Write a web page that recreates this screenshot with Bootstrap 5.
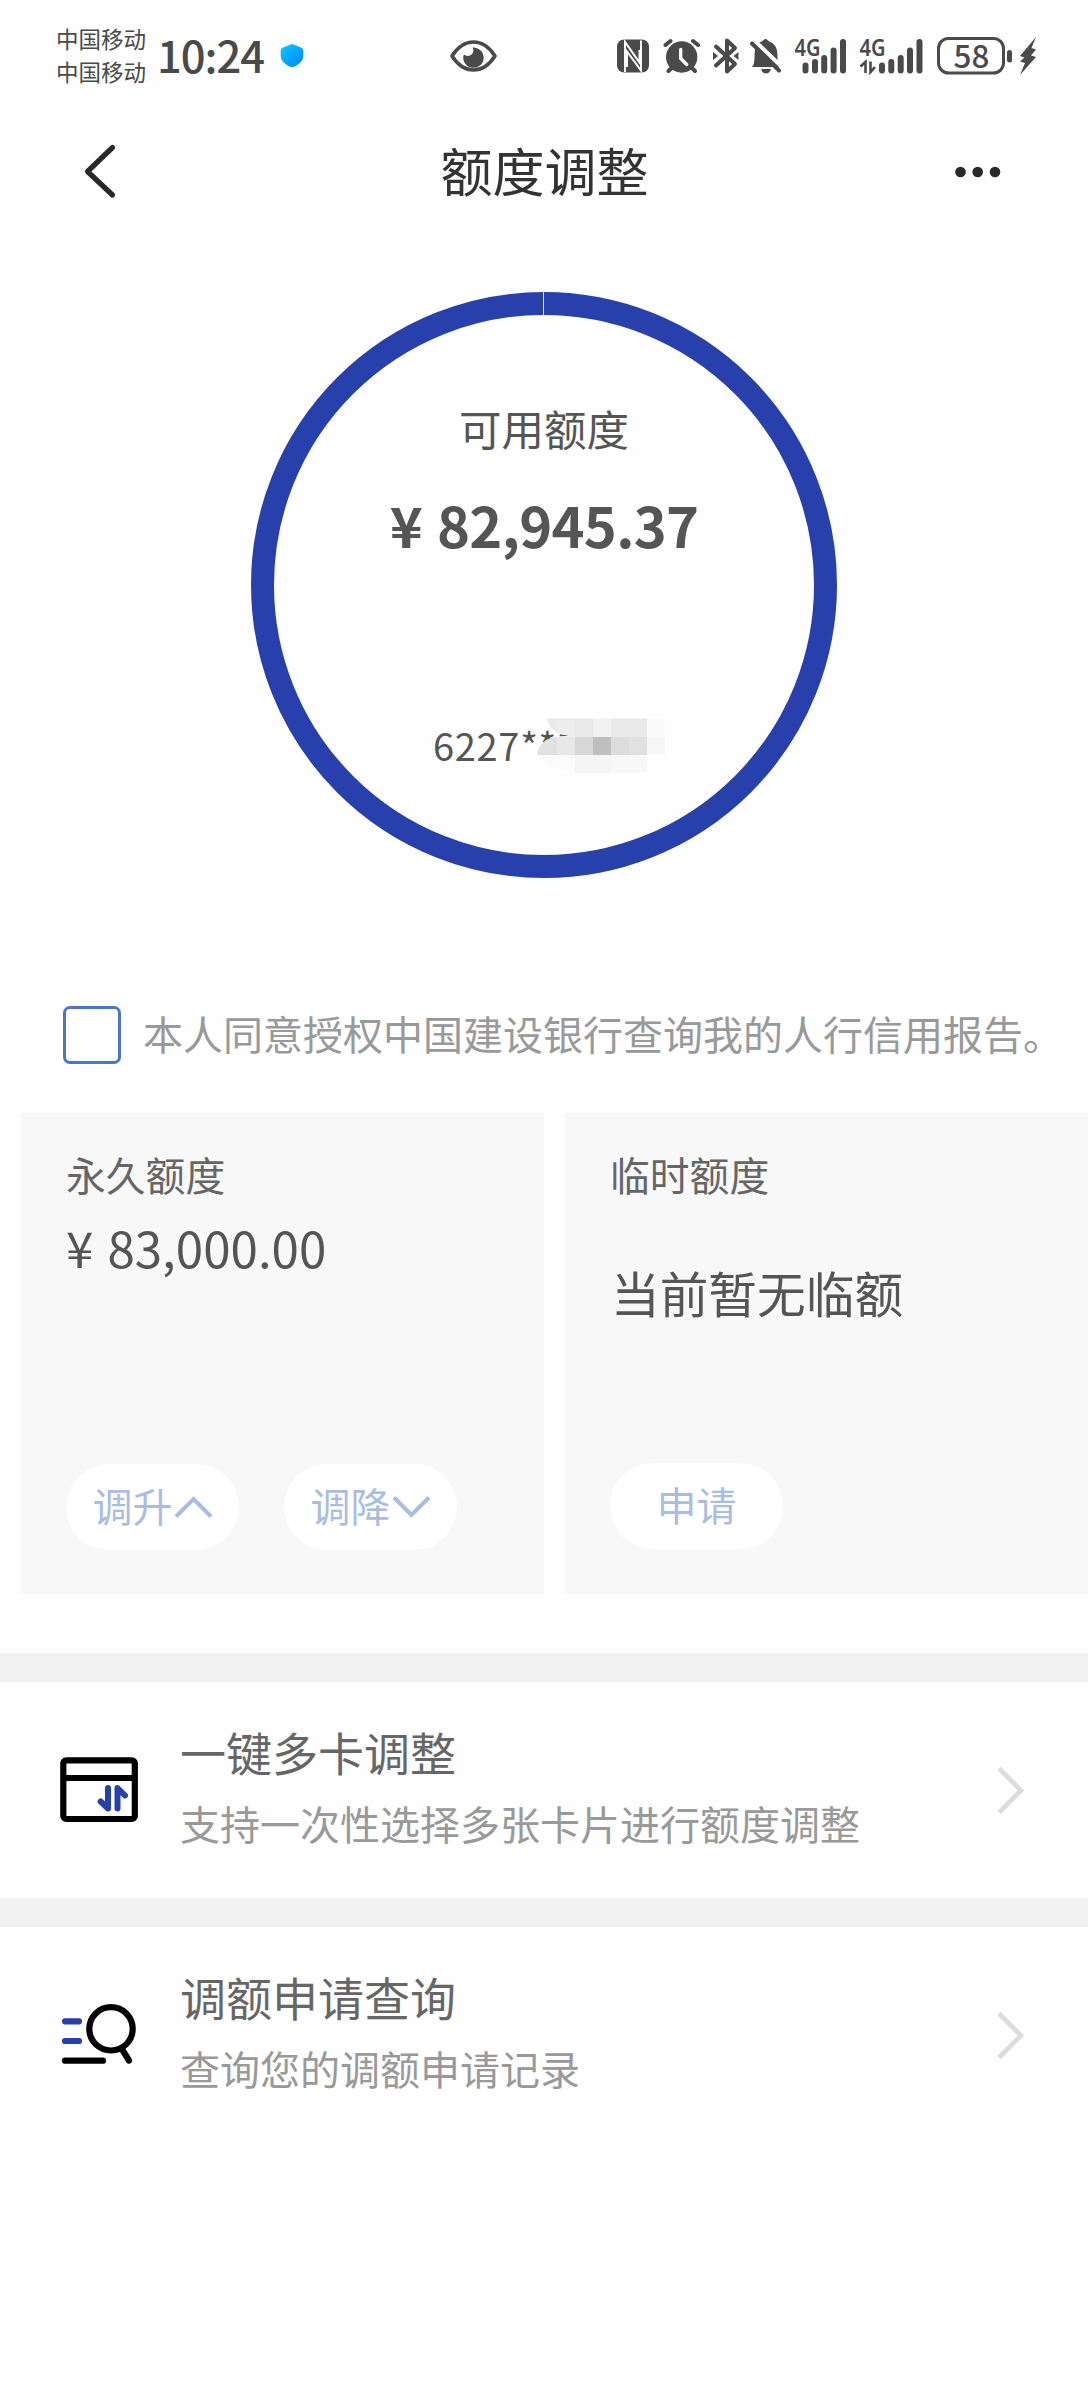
<!DOCTYPE html>
<html lang="zh-CN">
<head>
<meta charset="utf-8">
<meta name="viewport" content="width=device-width, initial-scale=1">
<title>额度调整</title>
<link rel="stylesheet" href="https://cdn.jsdelivr.net/npm/bootstrap@5.3.0/dist/css/bootstrap.min.css">
<style>
body{font-family:"Noto Sans","Noto Sans CJK SC",sans-serif;background:#fefefe;color:#555;width:1088px;height:2400px;overflow:hidden}
svg{display:block;flex:none}
.figures{font-family:"Noto Sans CJK SC","Noto Sans",sans-serif}
.statusbar{height:110px;padding:0 50px 0 56px;color:#4a4a4a}
.carrier{font-size:22.5px;line-height:32.5px;width:101px;padding-top:24px}
.clock{font-size:43.5px;line-height:60px;font-weight:500;letter-spacing:-1px;padding-top:25px;width:123px;white-space:nowrap}
.status-icons{padding-top:28px}
.titlebar{height:122px;padding:0 86px 0 80px}
.titlebar h1{font-size:52px;line-height:70px;color:#333;font-weight:400;margin:2px 0 0 15px}
.ring{width:586px;height:586px;margin:60px auto 0;border:23.5px solid #2840ab}
.ring-gap{width:1.5px;height:24px;left:268.7px;top:-24px;background:#dfe4f6}
.ring-label{font-size:42.5px;line-height:60px;padding-top:85px}
.ring-amount{font-size:56px;line-height:76px;font-weight:700;letter-spacing:-.7px;word-spacing:3px;padding-top:26px}
.card-no{font-size:38px;line-height:52px;letter-spacing:.7px;margin:157px 0 0 159px;align-self:flex-start}
.mosaic{left:97px;top:-6px}
.agree{margin-top:128px;padding-left:63px;height:58px}
.agree .form-check-input{width:58px;height:58px;margin:0 22px 0 0;border:3px solid #4a76c9;border-radius:7px;background:#fff;flex:none}
.agree label{font-size:40px;line-height:58px;color:#999}
.limits{margin:49px 0 59px;padding-left:21px;gap:21px;height:481px}
.limit{background:#f8f8f8;width:523px;padding:34px 45px 0}
.limit h2{font-size:39.8px;line-height:58px;font-weight:400;color:#666;margin:0}
.limit-sum{font-size:49.3px;line-height:66px;word-spacing:3px;margin-top:9px;height:69px}
.limit-none{font-size:48.7px;line-height:66px;margin-top:56px;margin-left:1px}
.actions{gap:45px;margin-top:181px}
.actions.single{margin-top:136px}
.actions .btn{width:173px;height:86px;border-radius:43px;background:#fff;color:#a9bde3;font-size:40px;line-height:58px;padding:0;border:0}
.band{height:29px;background:#f1f1f1}
.entry{height:216px;padding:0 63px 0 59px}
.entry-text{margin-left:39px;padding-top:41px}
.entry-text h3{font-size:46px;line-height:60px;font-weight:400;color:#666;margin:0 0 12px}
.entry-text p{font-size:40px;line-height:60px;color:#999;margin:0}
</style>
</head>
<body>
<header class="statusbar d-flex align-items-start">
  <div class="carrier">中国移动<br>中国移动</div>
  <div class="clock figures">10:24</div>
  <div class="status-icons d-flex flex-grow-1">
    <svg width="24" height="56" viewBox="279 28 24 56"><defs><linearGradient id="sh" x1="0" y1="0" x2="1" y2="1"><stop offset="0" stop-color="#05cdff"/><stop offset="1" stop-color="#0580ff"/></linearGradient></defs><path d="M291 44l9 3.500q2.300.8 2.300 3.200v5q0 7-10 11.200q-1.300.5-2.600 0q-10-4.200-10-11.200v-5q0-2.400 2.300-3.200z" fill="url(#sh)"/></svg>
    <svg style="margin-left:144px" width="52" height="56" viewBox="447 28 52 56"><path d="M451 56Q460 42 472.500 42T494 56Q485 70 472.500 70T451 56z" fill="none" stroke="#4a4a4a" stroke-width="3.600" stroke-linejoin="round"/><path d="M471.500 47.500a10.200 10.200 0 1 1-9 8q.7-1 1.200-.5a5.500 5.500 0 0 0 8.300-6.400z" fill="#4a4a4a"/></svg>
    <svg class="ms-auto" width="34" height="56" viewBox="616 28 34 56"><rect x="617" y="39.500" width="32" height="33" rx="7" fill="#4a4a4a"/><path d="M625 72V42l14.500 20.500V50M641 40.500V70.500L627 51.500V67" fill="none" stroke="#fff" stroke-width="2"/></svg>
    <svg style="margin-left:13px" width="38" height="56" viewBox="663 28 38 56"><g stroke="#4a4a4a" stroke-width="4" stroke-linecap="round"><path d="M665.500 45l5-4M698 45l-5-4M668.500 71l5-5M695 71l-5-5"/></g><circle cx="681.700" cy="57" r="15.700" fill="#4a4a4a"/><path d="M680.700 49.500v9l6 6" fill="none" stroke="#fff" stroke-width="3.300" stroke-linecap="round" stroke-linejoin="round"/></svg>
    <svg style="margin-left:11px" width="28" height="56" viewBox="712 28 28 56"><path d="M716 46.500l19 17.500-8 7.500v-31l8 7.500-19 17.500" fill="none" stroke="#4a4a4a" stroke-width="4" stroke-linecap="round" stroke-linejoin="round"/><path d="M713 52l5 4-5 4zM738.500 52l-5 4 5 4z" fill="#4a4a4a"/></svg>
    <svg style="margin-left:9px" width="34" height="56" viewBox="749 28 34 56"><path d="M752 67q2.500-3 2.500-8v-4q0-12 8-14 3-4 6 0 9 3 9 14v5q0 4 3 7zM761 69h10q-1.500 4.500-5 4.500T761 69z" fill="#4a4a4a"/><path d="M754.500 40.500L783 68" stroke="#fefefe" stroke-width="4"/><path d="M752 43.500L779 70.500" stroke="#4a4a4a" stroke-width="4" stroke-linecap="round"/></svg>
    <svg style="margin-left:11px" width="54" height="56" viewBox="794 28 54 56"><text x="794.500" y="56" font-size="23" font-weight="600" textLength="26" lengthAdjust="spacingAndGlyphs" fill="#4a4a4a">4G</text><path d="M805.500 65.500v5M815 62v8.500M824.200 58v12.500M833.600 50.500v20M843 42v28.500" stroke="#4a4a4a" stroke-width="6" stroke-linecap="round"/></svg>
    <svg style="margin-left:11px" width="66" height="56" viewBox="859 28 66 56"><text x="859.500" y="56" font-size="23" font-weight="600" textLength="26" lengthAdjust="spacingAndGlyphs" fill="#4a4a4a">4G</text><path d="M882 65.500v5M891.300 62v8.500M900.700 58v12.500M910 50.500v20M919.500 42v28.500" stroke="#4a4a4a" stroke-width="6" stroke-linecap="round"/><path d="M860.500 66.500l5-4.500v11M870.500 61.500v10.500l4.500-5" fill="none" stroke="#4a4a4a" stroke-width="2.600"/></svg>
    <svg style="margin-left:11px" width="78" height="56" viewBox="936 28 78 56"><rect x="938.500" y="38.500" width="65" height="34.500" rx="10" fill="none" stroke="#4a4a4a" stroke-width="3"/><rect x="1007" y="50" width="5" height="12.500" rx="2.500" fill="#4a4a4a"/><text class="figures" x="971.500" y="67.500" text-anchor="middle" font-size="31.500" font-weight="500" fill="#4a4a4a">58</text></svg>
    <svg style="margin-left:4px" width="20" height="56" viewBox="1018 28 20 56"><path d="M1036 37l-16 19 4.500 1.500-4.500 4 5 1.500-5 12 16-18-5-1.500 5-6-4.500-1.500z" fill="#4a4a4a"/></svg>
  </div>
</header>

<nav class="titlebar d-flex align-items-center justify-content-between">
  <svg width="40" height="60" viewBox="80 141 40 60"><path d="M112.500 147.500L87.500 171.500l25 23.500" fill="none" stroke="#292929" stroke-width="5.200" stroke-linecap="round" stroke-linejoin="round"/></svg>
  <h1>额度调整</h1>
  <svg width="48" height="20" viewBox="954 161 48 20"><g fill="#292929"><circle cx="960.500" cy="172" r="5.300"/><circle cx="977.700" cy="172" r="5.300"/><circle cx="995" cy="172" r="5.300"/></g></svg>
</nav>

<section class="ring rounded-circle position-relative d-flex flex-column align-items-center">
  <span class="ring-gap position-absolute"></span>
  <div class="ring-label">可用额度</div>
  <div class="ring-amount figures">¥ 82,945.37</div>
  <div class="card-no figures position-relative">6227***
    <svg class="mosaic position-absolute" width="200" height="62" viewBox="530 713 200 62">
      <defs><clipPath id="mz"><path d="M547 718.500H665V760Q648 772.500 640 772.500H575Q537 765 537 753Q540 741 552 737.500L569 735.500Q549 733 547 718.500z"/></clipPath></defs>
      <g clip-path="url(#mz)" shape-rendering="crispEdges">
        <path fill="#e9e9e9" d="M530 718h45v19h-45zM611 718h36v19h-36z"/><path fill="#ededed" d="M557 718h18v19h-18z"/><path fill="#e9e9e9" d="M575 718h18v19h-18z"/><path fill="#f2f2f2" d="M593 718h18v19h-18z"/><path fill="#fafafa" d="M647 718h18v19h-18z"/>
        <path fill="#e1e1e1" d="M530 737h27v18h-27z"/><path fill="#e8e8e8" d="M557 737h18v18h-18z"/><path fill="#d7d7d7" d="M575 737h18v18h-18z"/><path fill="#bfbfbf" d="M593 737h18v18h-18z"/><path fill="#dcdcdc" d="M611 737h18v18h-18z"/><path fill="#e1e1e1" d="M629 737h18v18h-18z"/><path fill="#f7f7f7" d="M647 737h18v18h-18z"/>
        <path fill="#fbfbfb" d="M530 755h45v18h-45z"/><path fill="#f5f5f5" d="M575 755h36v18h-36z"/><path fill="#f8f8f8" d="M611 755h36v18h-36z"/><path fill="#fefefe" d="M647 755h18v18h-18z"/>
      </g>
    </svg>
  </div>
</section>

<div class="agree d-flex">
  <input class="form-check-input" type="checkbox" id="agree">
  <label class="text-nowrap" for="agree">本人同意授权中国建设银行查询我的人行信用报告。</label>
</div>

<section class="limits d-flex">
  <div class="limit">
    <h2>永久额度</h2>
    <div class="limit-sum figures">¥ 83,000.00</div>
    <div class="actions d-flex">
      <button class="btn d-flex align-items-center justify-content-center">调升<svg width="40" height="24" viewBox="0 0 40 24"><path d="M3 21.500L20.500 4 38 21.500" fill="none" stroke="#a9bde3" stroke-width="4"/></svg></button>
      <button class="btn d-flex align-items-center justify-content-center">调降<svg width="40" height="24" viewBox="0 0 40 24"><path d="M3 2.500L20.500 20 38 2.500" fill="none" stroke="#a9bde3" stroke-width="4"/></svg></button>
    </div>
  </div>
  <div class="limit">
    <h2>临时额度</h2>
    <div class="limit-none">当前暂无临额</div>
    <div class="actions single d-flex">
      <button class="btn">申请</button>
    </div>
  </div>
</section>

<div class="band"></div>
<a class="entry d-flex text-decoration-none">
  <svg class="align-self-center" width="82" height="76" viewBox="59 1752 82 76"><rect x="63.300" y="1760.300" width="71.500" height="58.700" rx="3" fill="none" stroke="#000" stroke-width="6.200"/><path d="M63 1778h72" stroke="#000" stroke-width="6"/><path d="M108 1788v20.500l-7.300-7M117.500 1808.500V1788l7.500 7.500" fill="none" stroke="#2840ab" stroke-width="6" stroke-linecap="round" stroke-linejoin="round"/></svg>
  <div class="entry-text flex-grow-1"><h3>一键多卡调整</h3><p>支持一次性选择多张卡片进行额度调整</p></div>
  <svg class="align-self-center" width="30" height="50" viewBox="995 1765 30 50"><path d="M999 1768.500l22 22-22 22" fill="none" stroke="#dcdcdc" stroke-width="4.600"/></svg>
</a>
<div class="band"></div>
<a class="entry d-flex text-decoration-none">
  <svg class="align-self-center" width="82" height="76" viewBox="59 1997 82 76"><path d="M65 2021.300h14M65 2041h14" stroke="#2840ab" stroke-width="6.200" stroke-linecap="round"/><path d="M65 2060.700h38M122.500 2050l6.500 10.500" stroke="#000" stroke-width="6.200" stroke-linecap="round"/><circle cx="111" cy="2028.800" r="21.700" fill="none" stroke="#000" stroke-width="6.200"/></svg>
  <div class="entry-text flex-grow-1"><h3>调额申请查询</h3><p>查询您的调额申请记录</p></div>
  <svg class="align-self-center" width="30" height="50" viewBox="995 1765 30 50"><path d="M999 1768.500l22 22-22 22" fill="none" stroke="#dcdcdc" stroke-width="4.600"/></svg>
</a>
<script src="https://cdn.jsdelivr.net/npm/bootstrap@5.3.0/dist/js/bootstrap.bundle.min.js"></script>
</body>
</html>
